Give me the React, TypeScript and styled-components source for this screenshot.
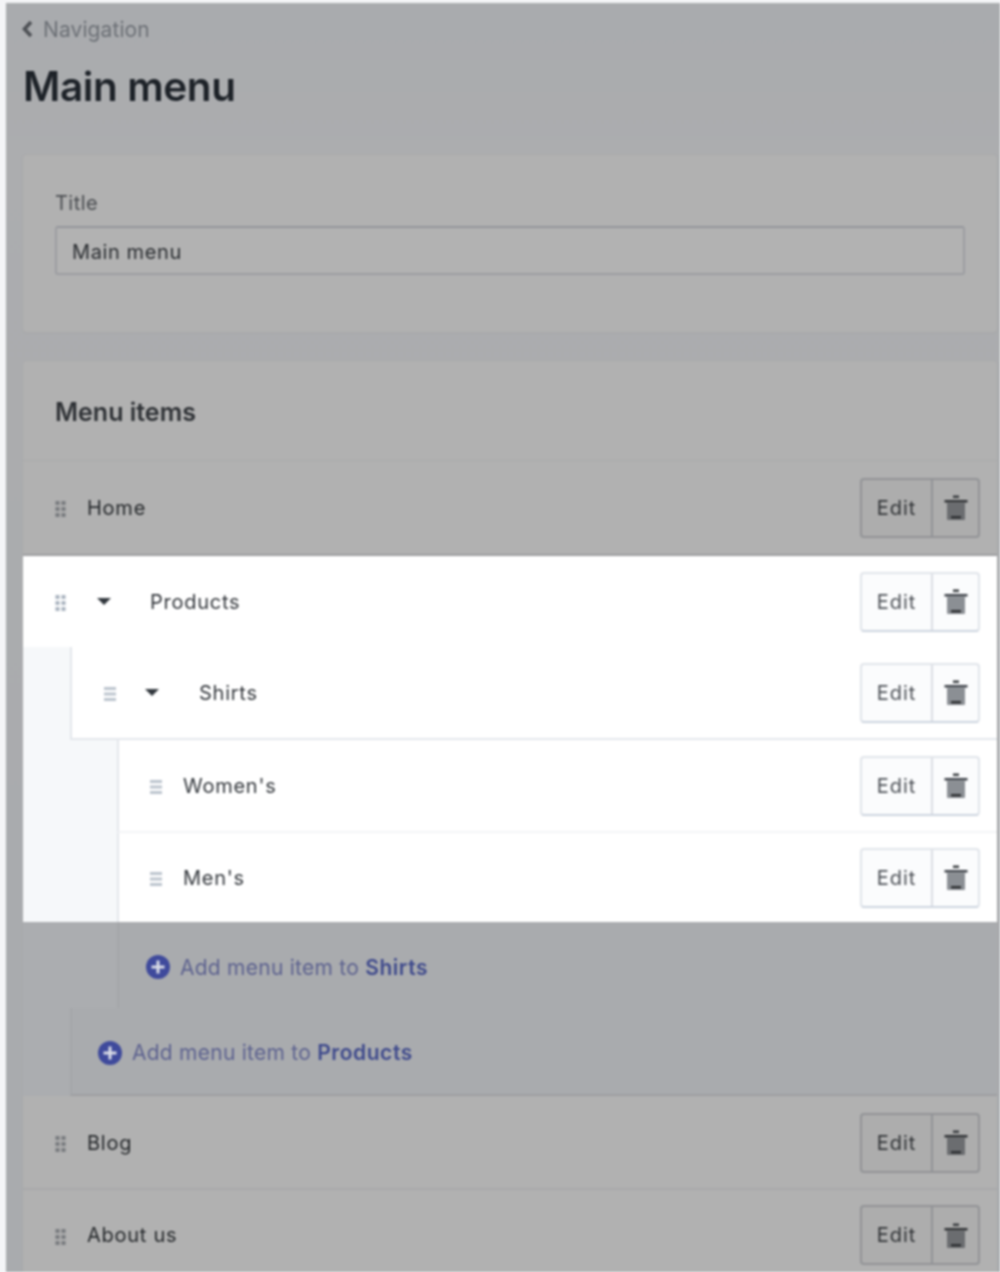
import React from "react";
import styled, { createGlobalStyle } from "styled-components";

const Global = createGlobalStyle`
  html, body { margin: 0; padding: 0; background: #f4f5f7; }
  body { font-family: Inter, "Liberation Sans", sans-serif; height: 1272px; overflow: hidden; }
`;

const Page = styled.div`
  margin: 3px 0 0 6px;
  height: 1269px;
  background: linear-gradient(#a9abae, #acadaf 150px, #a9abae 1000px);
  padding: 14px 3px 0 17px;
  box-sizing: border-box;
  overflow: hidden;
  filter: blur(0.8px);
`;

const Back = styled.div`
  display: flex;
  align-items: center;
  gap: 10px;
  height: 24px;
  margin-left: -2px;
  font-size: 21px;
  letter-spacing: 0.1px;
  color: #6c7076;
`;

const Heading = styled.h1`
  margin: 20px 0 0 0;
  font-size: 40.5px;
  line-height: 52px;
  font-weight: 600;
  letter-spacing: -0.4px;
  color: #1d2228;
`;

const Card = styled.section`
  margin-top: 40px;
  background: #b1b1b1;
  border-radius: 4px;
  box-shadow: 0 0 0 1px #a9aaab, 0 1px 2px #a2a3a5;
`;

const TitleCard = styled(Card)`
  margin-top: 42px;
  height: 177px;
  padding: 34px 32px 0;
  box-sizing: border-box;
`;

const MenuCard = styled(Card)`
  margin-top: 29px;
`;

const Label = styled.div`
  font-size: 20px;
  line-height: 28px;
  letter-spacing: 0.45px;
  color: #4a4d51;
`;

const Input = styled.div`
  margin-top: 9px;
  height: 49px;
  box-sizing: border-box;
  padding: 3px 0 0 15px;
  display: flex;
  align-items: center;
  font-size: 20px;
  letter-spacing: 0.6px;
  color: #2a2d31;
  border: 2px solid #9c9da1;
  border-top-color: #94959b;
  border-radius: 3px;
  background: #b2b2b2;
`;

const MenuHeading = styled.h2`
  margin: 0;
  height: 100px;
  padding: 2px 0 0 32px;
  display: flex;
  align-items: center;
  font-size: 25px;
  font-weight: 600;
  color: #2e3135;
  border-bottom: 1px solid #a9aaab;
  box-sizing: border-box;
`;

const Row = styled.div<{ $lit?: boolean; $indent?: number; $h: number }>`
  height: ${(p) => p.$h}px;
  padding-left: ${(p) => p.$indent ?? 0}px;
  box-sizing: border-box;
  background: ${(p) => (p.$lit ? "#f6f8fa" : "#abadb0")};
  display: flex;
`;

const RowBody = styled.div<{ $lit?: boolean; $pad: number; $edge?: boolean; $tone?: string; $sep?: string; $drop?: number }>`
  flex: 1;
  display: flex;
  align-items: center;
  padding: ${(p) => p.$drop ?? 0}px 17px 0 ${(p) => p.$pad}px;
  background: ${(p) => p.$tone ?? (p.$lit ? "#ffffff" : "#b1b1b1")};
  border-left: ${(p) => (p.$edge ? `2px solid ${p.$lit ? "#e4e7ec" : "#a4a6a9"}` : "none")};
  border-bottom: ${(p) => (p.$sep ? `2px solid ${p.$sep}` : "none")};
  box-sizing: border-box;
`;

const Handle = styled.svg`
  flex: none;
  width: 12px;
  height: 16px;
  margin-top: 3px;
`;

const Caret = styled.svg`
  flex: none;
  width: 14px;
  height: 7px;
`;

const Name = styled.span<{ $lit?: boolean; $gap: number }>`
  margin-left: ${(p) => p.$gap}px;
  flex: 1;
  font-size: 20px;
  letter-spacing: 0.75px;
  color: ${(p) => (p.$lit ? "#33373c" : "#25282b")};
`;

const Buttons = styled.div<{ $lit?: boolean }>`
  flex: none;
  width: 120px;
  height: 60px;
  display: flex;
  box-sizing: border-box;
  border-radius: 4px;
  border: 2px solid ${(p) => (p.$lit ? "#e1e5ea" : "#929396")};
  border-bottom-color: ${(p) => (p.$lit ? "#cdd5df" : "#929396")};
  background: ${(p) => (p.$lit ? "#fbfcfd" : "#adadad")};
`;

const EditBtn = styled.div<{ $lit?: boolean }>`
  width: 71px;
  display: flex;
  align-items: center;
  justify-content: center;
  font-size: 20px;
  letter-spacing: 1px;
  box-sizing: border-box;
  color: ${(p) => (p.$lit ? "#4c5056" : "#303336")};
  border-right: 2px solid ${(p) => (p.$lit ? "#dadee4" : "#929396")};
`;

const TrashBtn = styled.div`
  flex: 1;
  display: flex;
  align-items: center;
  justify-content: center;
  padding-top: 1px;
`;

const AddLink = styled.div`
  display: flex;
  align-items: center;
  gap: 10px;
  font-size: 21px;
  letter-spacing: 0.25px;
  color: #5d628f;
`;

const Strong = styled.strong`
  font-weight: 600;
  letter-spacing: 0.55px;
  color: #3f4a8c;
`;

const CaretWrap = styled.span`
  display: flex;
  align-items: center;
`;

const CaretSlot = styled.span<{ $gap: number; $lead: number }>`
  display: flex;
  margin: 0 ${(p) => p.$gap}px 0 ${(p) => p.$lead}px;
`;

const Dots = ({ lit, wide }: { lit?: boolean; wide?: boolean }) => {
  const c = lit ? "#a9b3bf" : "#787b7f";
  return (
    <Handle viewBox="0 0 12 16">
      {wide
        ? [1, 6.5, 12].map((y) => <rect key={y} x="0" y={y} width="12" height="3" fill={lit ? "#bcc4ce" : c} />)
        : [0, 6, 12].flatMap((y) =>
            [0.5, 6.5].map((x) => <rect key={`${x}${y}`} x={x} y={y} width="4" height="4" fill={c} />)
          )}
    </Handle>
  );
};

const CaretIcon = () => (
  <Caret viewBox="0 0 14 7">
    <path d="M0 0h14l-7 7z" fill="#31373d" />
  </Caret>
);

const Trash = ({ lit }: { lit?: boolean }) => (
  <svg width="24" height="26" viewBox="0 0 24 26">
    <rect x="9" y="0.5" width="6" height="2.5" fill="#3a3d40" />
    <rect x="0.5" y="5" width="23" height="2.5" fill={lit ? "#3c4047" : "#2e3033"} />
    <path d="M3 7.5h18v16.5a1 1 0 0 1-1 1H4a1 1 0 0 1-1-1z" fill={lit ? "#8b8f94" : "#6b6d70"} />
    <rect x="7" y="21" width="10" height="2.5" fill="#2e3033" />
  </svg>
);

const Actions = ({ lit }: { lit?: boolean }) => (
  <Buttons $lit={lit}>
    <EditBtn $lit={lit}>Edit</EditBtn>
    <TrashBtn>
      <Trash lit={lit} />
    </TrashBtn>
  </Buttons>
);

const Plus = () => (
  <svg width="24" height="24" viewBox="0 0 24 24" style={{ flex: "none" }}>
    <circle cx="12" cy="12" r="12" fill="#3f4a9c" />
    <path d="M10.5 5.5h3v5h5v3h-5v5h-3v-5h-5v-3h5z" fill="#d9dbe6" />
  </svg>
);

function CaretRow({ label, gap, lead }: { label: string; gap: number; lead: number }) {
  return (
    <CaretWrap>
      <CaretSlot $gap={gap} $lead={lead}>
        <CaretIcon />
      </CaretSlot>
      {label}
    </CaretWrap>
  );
}

export default function App() {
  return (
    <>
      <Global />
      <Page>
        <Back>
          <svg width="12" height="18" viewBox="0 0 12 18">
            <path d="M10 2 3.5 9l6.5 7" fill="none" stroke="#4d5055" strokeWidth="3.6" />
          </svg>
          Navigation
        </Back>
        <Heading>Main menu</Heading>
        <TitleCard>
          <Label>Title</Label>
          <Input>Main menu</Input>
        </TitleCard>
        <MenuCard>
          <MenuHeading>Menu items</MenuHeading>
          <Row $h={95}>
            <RowBody $pad={32} $sep="#9c9d9f">
              <Dots />
              <Name $gap={20}>Home</Name>
              <Actions />
            </RowBody>
          </Row>
          <Row $lit $h={91}>
            <RowBody $lit $pad={32}>
              <Dots lit />
              <Name $lit $gap={0}>
                <CaretRow label="Products" gap={39} lead={30} />
              </Name>
              <Actions lit />
            </RowBody>
          </Row>
          <Row $lit $indent={47} $h={93}>
            <RowBody $lit $edge $pad={32} $sep="#e4e7ec">
              <Dots lit wide />
              <Name $lit $gap={0}>
                <CaretRow label="Shirts" gap={40} lead={29} />
              </Name>
              <Actions lit />
            </RowBody>
          </Row>
          <Row $lit $indent={94} $h={93}>
            <RowBody $lit $edge $pad={31} $sep="#f3f4f6">
              <Dots lit wide />
              <Name $lit $gap={21}>Women's</Name>
              <Actions lit />
            </RowBody>
          </Row>
          <Row $lit $indent={94} $h={89}>
            <RowBody $lit $edge $pad={31}>
              <Dots lit wide />
              <Name $lit $gap={21}>Men's</Name>
              <Actions lit />
            </RowBody>
          </Row>
          <Row $indent={94} $h={86}>
            <RowBody $edge $pad={27} $tone="#a9abae" $drop={4}>
              <AddLink>
                <Plus />
                <span>
                  Add menu item to <Strong>Shirts</Strong>
                </span>
              </AddLink>
            </RowBody>
          </Row>
          <Row $indent={47} $h={88}>
            <RowBody $edge $pad={26} $tone="#a9abae" $sep="#9d9ea1" $drop={3}>
              <AddLink>
                <Plus />
                <span>
                  Add menu item to <Strong>Products</Strong>
                </span>
              </AddLink>
            </RowBody>
          </Row>
          <Row $h={94}>
            <RowBody $pad={32} $sep="#a8a9aa" $drop={1}>
              <Dots />
              <Name $gap={20}>Blog</Name>
              <Actions />
            </RowBody>
          </Row>
          <Row $h={90}>
            <RowBody $pad={32}>
              <Dots />
              <Name $gap={20}>About us</Name>
              <Actions />
            </RowBody>
          </Row>
        </MenuCard>
      </Page>
    </>
  );
}
